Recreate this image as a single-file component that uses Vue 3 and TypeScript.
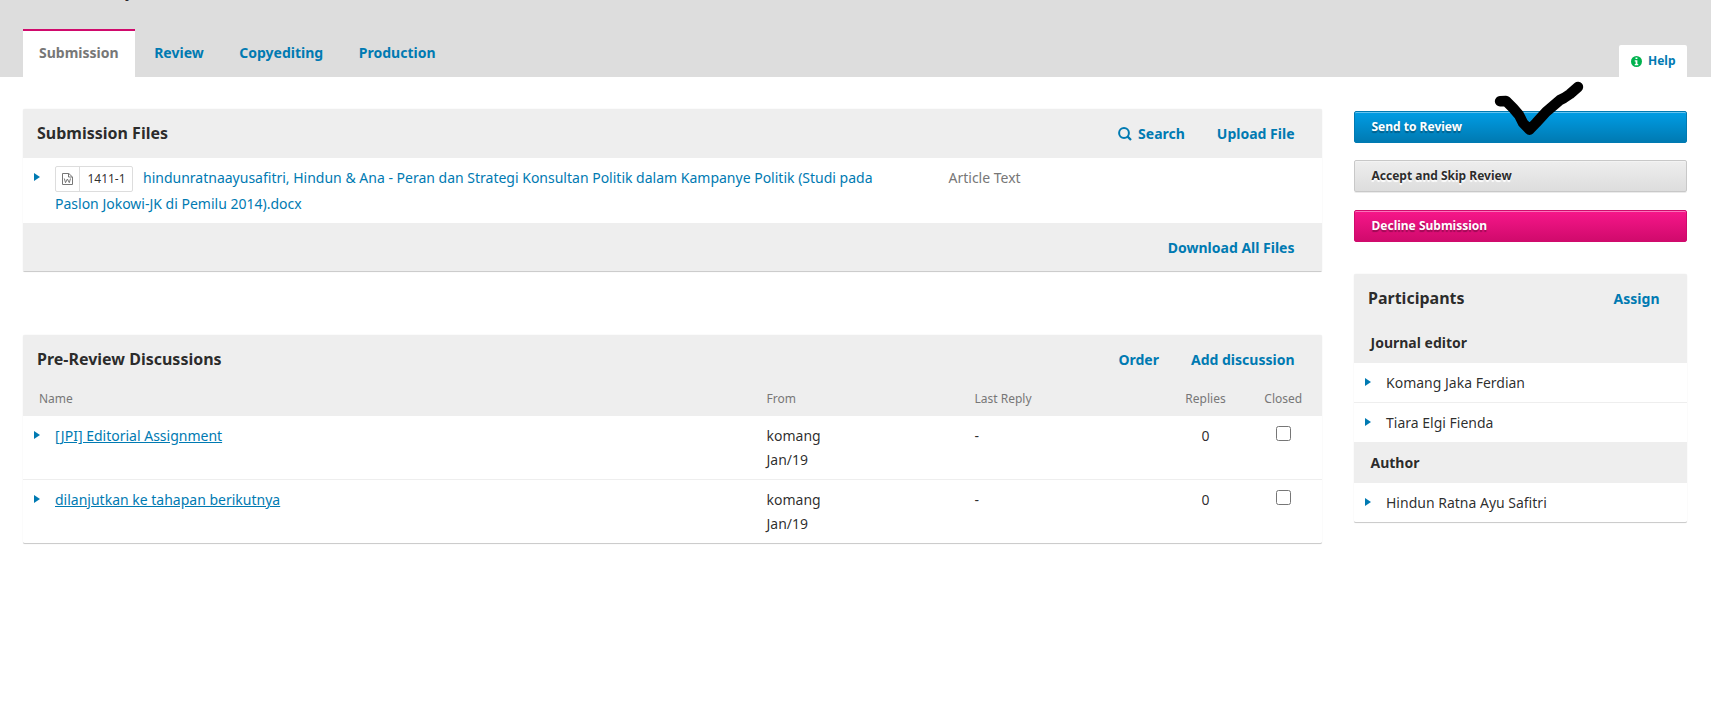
<script setup lang="ts">
interface Discussion {
  title: string
  from: string
  date: string
  lastReply: string
  replies: number
}

const tabs: string[] = ['Submission', 'Review', 'Copyediting', 'Production']

const discussions: Discussion[] = [
  { title: '[JPI] Editorial Assignment', from: 'komang', date: 'Jan/19', lastReply: '-', replies: 0 },
  { title: 'dilanjutkan ke tahapan berikutnya', from: 'komang', date: 'Jan/19', lastReply: '-', replies: 0 },
]

const groups: { role: string; people: string[] }[] = [
  { role: 'Journal editor', people: ['Komang Jaka Ferdian', 'Tiara Elgi Fienda'] },
  { role: 'Author', people: ['Hindun Ratna Ayu Safitri'] },
]
</script>

<template>
  <div class="page">
    <header class="top">
      <div class="title-tail"><span>y</span></div>
      <nav class="tabs">
        <a v-for="(tab, i) in tabs" :key="tab" class="tab" :class="{ active: i === 0 }">{{ tab }}</a>
      </nav>
      <a class="help">
        <svg width="11" height="11" viewBox="0 0 10 10">
          <circle cx="5" cy="5" r="5" fill="#00b24e" />
          <path d="M4.100 1.300h1.700v1.400H4.100zM3.400 3.800h2.400v3.400h.8v1.100H3.400V7.200h.8V4.900h-.8z" fill="#fff" />
        </svg>
        <span>Help</span>
      </a>
    </header>

    <div class="content">
      <main class="main">
        <section class="panel files">
          <div class="panel-head">
            <h4>Submission Files</h4>
            <div class="actions">
              <a class="search">
                <svg width="14" height="14" viewBox="0 0 14 14" fill="none" stroke="#007ab2" stroke-width="2">
                  <circle cx="6" cy="6" r="4.900" />
                  <path d="M9.400 9.400l3.600 3.600" stroke-width="2.300" />
                </svg>
                Search
              </a>
              <a>Upload File</a>
            </div>
          </div>
          <div class="file-row">
            <i class="arrow"></i>
            <div class="file-name">
              <span class="badge">
                <span class="badge-icon">
                  <svg width="11" height="12" viewBox="0 0 11 12" fill="none" stroke="#777">
                    <path d="M.5.5h6.300l3.700 3.500v7.500H.5zM6.500.5V4h4" />
                    <path d="M2.300 5.500l1.200 4.200 1.900-3.700 1.900 3.700 1.200-4.200" />
                  </svg>
                </span>
                <span class="badge-id">1411-1</span>
              </span>
              <a>hindunratnaayusafitri, Hindun &amp; Ana - Peran dan Strategi Konsultan Politik dalam Kampanye Politik (Studi pada Paslon Jokowi-JK di Pemilu 2014).docx</a>
            </div>
            <span class="kind">Article Text</span>
          </div>
          <div class="panel-foot"><a>Download All Files</a></div>
        </section>

        <section class="panel discussions">
          <div class="panel-head">
            <h4>Pre-Review Discussions</h4>
            <div class="actions"><a>Order</a><a>Add discussion</a></div>
          </div>
          <div class="grid-row columns">
            <span class="col-name">Name</span>
            <span>From</span>
            <span>Last Reply</span>
            <span class="center">Replies</span>
            <span class="center">Closed</span>
          </div>
          <div v-for="d in discussions" :key="d.title" class="grid-row item">
            <div class="subject"><i class="arrow"></i><a>{{ d.title }}</a></div>
            <div>{{ d.from }}<br />{{ d.date }}</div>
            <div>{{ d.lastReply }}</div>
            <div class="center">{{ d.replies }}</div>
            <div class="center"><input type="checkbox" /></div>
          </div>
        </section>
      </main>

      <aside class="side">
        <div class="decisions">
          <button class="btn primary">Send to Review</button>
          <button class="btn plain">Accept and Skip Review</button>
          <button class="btn warn">Decline Submission</button>
          <svg class="tick" width="100" height="65" viewBox="0 0 100 65" fill="none" stroke="#000" stroke-linecap="round" stroke-linejoin="round">
            <path d="M10 26.200L16 26l7 7 6 7 4 8 6.500 6.700L46 48l10-11 14-12 4-2 6-4 8-7" stroke-width="10.400" />
          </svg>
        </div>

        <section class="panel participants">
          <div class="panel-head">
            <h4>Participants</h4>
            <div class="actions"><a>Assign</a></div>
          </div>
          <template v-for="g in groups" :key="g.role">
            <div class="role">{{ g.role }}</div>
            <div v-for="p in g.people" :key="p" class="person"><i class="arrow"></i>{{ p }}</div>
          </template>
        </section>
      </aside>
    </div>
  </div>
</template>

<style>
body {
  margin: 0;
  background: #fff;
}
</style>

<style scoped>
.page {
  height: 720px;
  overflow: hidden;
  font-family: 'Noto Sans', 'Open Sans', sans-serif;
  font-size: 14px;
  line-height: 24px;
  color: rgba(0, 0, 0, 0.84);
}
.page * {
  box-sizing: border-box;
}
a {
  color: #007ab2;
  text-decoration: none;
}
.top {
  position: relative;
  height: 77px;
  background: #ddd;
  display: flex;
  justify-content: space-between;
  align-items: flex-end;
  padding: 0 24px 0 23px;
}
.title-tail {
  position: absolute;
  left: 125px;
  top: 0;
  height: 2px;
  overflow: hidden;
  font-weight: 700;
  line-height: 16px;
}
.title-tail span {
  display: block;
  margin-top: -15px;
}
.tabs {
  display: flex;
  gap: 3.600px;
}
.tab {
  height: 48px;
  padding: 12px 16px 0;
  font-weight: 700;
}
.tab.active {
  background: #fff;
  color: #777;
  border-top: 2px solid #d00a6c;
  padding-top: 10px;
}
.help {
  display: flex;
  align-items: center;
  gap: 6px;
  width: 68px;
  height: 32px;
  padding-left: 12px;
  background: #fff;
  border-radius: 2px 2px 0 0;
  font-size: 12px;
  font-weight: 700;
}
.content {
  display: grid;
  grid-template-columns: 1299px 333px;
  gap: 32px;
  padding: 32px 0 0 23px;
}
.main {
  display: flex;
  flex-direction: column;
  gap: 63px;
}
.panel {
  background: #fff;
  border-radius: 2px;
  box-shadow: 0 0 1px rgba(0, 0, 0, 0.18);
  border-bottom: 1px solid #ccc;
}
.panel-head {
  display: flex;
  justify-content: space-between;
  align-items: center;
  height: 49px;
  padding: 0 27.500px 0 14px;
  background: #eee;
  border-radius: 2px 2px 0 0;
}
h4 {
  margin: 0;
  padding-bottom: 2px;
  font-size: 16px;
  font-weight: 700;
  line-height: 24px;
}
.actions {
  display: flex;
  gap: 32px;
  font-weight: 700;
}
.search {
  display: flex;
  align-items: center;
  gap: 6.500px;
}
.arrow {
  flex: none;
  width: 0;
  height: 0;
  border: solid transparent;
  border-width: 4px 0 4px 6px;
  border-left-color: #007ab2;
}
.file-row {
  display: grid;
  grid-template-columns: 21px 893.500px 1fr;
  height: 65px;
  padding: 8px 0 0 11px;
}
.file-row .arrow {
  margin-top: 7px;
}
.file-name {
  display: block;
  width: 840px;
  line-height: 26px;
  margin-top: -1px;
}
.badge {
  display: inline-flex;
  width: 78px;
  height: 26px;
  margin: 1px 10px -1px 0;
  vertical-align: top;
  border: 1px solid #ddd;
  border-radius: 2px;
  color: rgba(0, 0, 0, 0.84);
  font-size: 12px;
  line-height: 24px;
}
.badge-icon {
  display: flex;
  align-items: center;
  justify-content: center;
  width: 24px;
  border-right: 1px solid #ddd;
}
.badge-id {
  flex: 1;
  padding-left: 1px;
  text-align: center;
}
.kind {
  color: #777;
}
.panel-foot {
  display: flex;
  justify-content: flex-end;
  align-items: center;
  height: 48px;
  padding: 2px 27.500px 0 0;
  background: #eee;
  font-weight: 700;
}
.grid-row {
  display: grid;
  grid-template-columns: 743.500px 208px 192px 78px 77.500px;
}
.columns {
  height: 32px;
  padding-top: 3px;
  background: #eee;
  color: #777;
  font-size: 12px;
}
.col-name {
  padding-left: 16px;
}
.center {
  text-align: center;
}
.item {
  height: 63px;
  padding-top: 8px;
}
.item + .item {
  height: 64px;
  border-top: 1px solid #eee;
}
.subject {
  display: flex;
  padding-left: 11px;
}
.subject .arrow {
  margin: 7px 15px 0 0;
}
.subject a {
  text-decoration: underline;
}
.item input {
  display: block;
  width: 15px;
  height: 15px;
  margin: 2px auto 0;
}
.side {
  display: flex;
  flex-direction: column;
}
.decisions {
  position: relative;
  display: flex;
  flex-direction: column;
  gap: 17px;
  padding-top: 2px;
}
.btn {
  height: 32px;
  padding: 0 16.500px;
  border: 1px solid;
  border-radius: 2px;
  font: 700 12px/30px 'Noto Sans', sans-serif;
  text-align: left;
}
.primary {
  color: #fff;
  background: linear-gradient(#009de5, #007ab2);
  border-color: #007ab2;
  box-shadow: inset 0 1px 0 rgba(255, 255, 255, 0.4);
  text-shadow: 0 2px 1px rgba(0, 0, 0, 0.3);
}
.plain {
  color: rgba(0, 0, 0, 0.84);
  background: linear-gradient(#eee, #ddd);
  border-color: #c8c8c8;
  box-shadow: inset 0 1px 0 #f3f3f3, 0 1px 0 rgba(0, 0, 0, 0.08);
  text-shadow: 0 2px 1px #fff;
}
.warn {
  margin-top: 1px;
  color: #fff;
  background: linear-gradient(#f7178a, #d00a6c);
  border-color: #d00a6c;
  box-shadow: inset 0 1px 0 rgba(255, 255, 255, 0.4);
  text-shadow: 0 2px 1px rgba(0, 0, 0, 0.3);
}
.tick {
  position: absolute;
  left: 136px;
  top: -34px;
}
.participants {
  margin-top: 32px;
}
.role {
  height: 41px;
  padding: 9px 0 0 16.500px;
  background: #eee;
  font-weight: 700;
}
.panel-head + .role {
  height: 40px;
  padding-top: 8px;
}
.person {
  display: flex;
  height: 39px;
  padding: 8px 0 0 11px;
}
.person + .person {
  height: 40px;
  border-top: 1px solid #eee;
}
.person .arrow {
  margin: 7px 15px 0 0;
}
</style>
